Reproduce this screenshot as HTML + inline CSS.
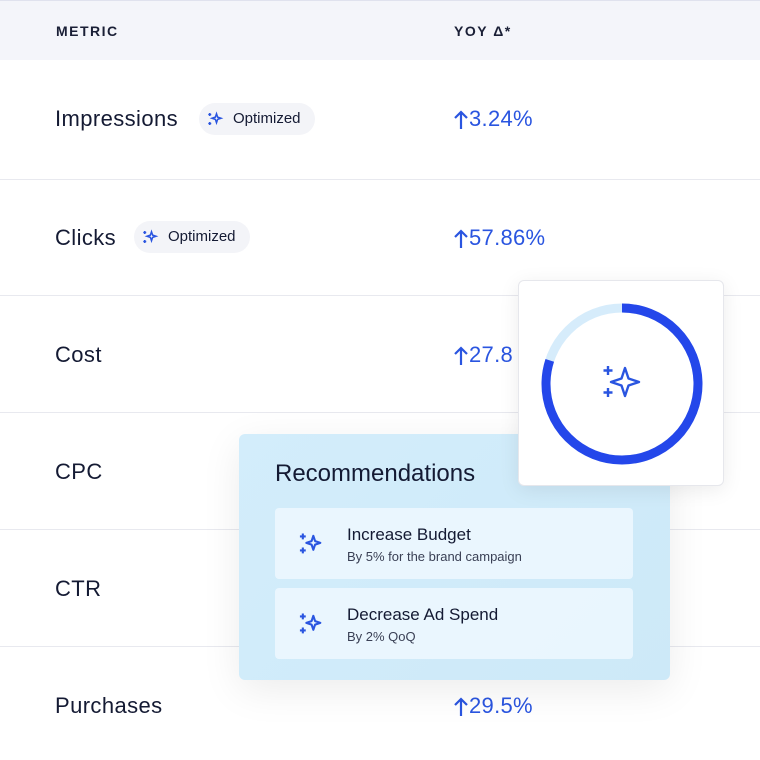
<!DOCTYPE html>
<html><head><style>
*{margin:0;padding:0;box-sizing:border-box}
body{width:760px;height:760px;overflow:hidden;background:#fff;font-family:"Liberation Sans",sans-serif;color:#141a33;position:relative}
.hdr{position:absolute;left:0;top:0;width:760px;height:60px;background:#f4f5fa;border-top:1px solid #e0e2ee}
.hdr span{position:absolute;top:22px;font-size:14px;font-weight:bold;letter-spacing:1.5px;color:#1a1f36}
.row{position:absolute;left:0;width:760px;border-bottom:1px solid #e8e9ef}
.lab{position:absolute;left:55px;font-size:22px;letter-spacing:0.4px;color:#141a33}
.val{position:absolute;left:453px;font-size:22px;letter-spacing:0.3px;color:#2a55e0;padding-left:16px}
.val svg{position:absolute;left:0;top:4px}
.pill{position:absolute;height:32px;border-radius:16px;background:#f3f4f8;font-size:15px;color:#141a33;padding:0 14px 0 34px;line-height:32px}
.pill svg{position:absolute;left:7px;top:7px}
.circ{position:absolute;left:518px;top:280px;width:206px;height:206px;background:#fff;border:1px solid #e6e7ec;border-radius:6px;box-shadow:0 4px 20px rgba(0,0,0,.08);z-index:2}
.rec{position:absolute;left:239px;top:434px;width:431px;height:246px;background:linear-gradient(135deg,#d3edfb,#cde9f8);border-radius:6px;box-shadow:0 10px 40px rgba(0,0,0,.08);z-index:1}
.rec h2{position:absolute;left:36px;top:26px;font-size:24px;font-weight:normal;color:#141a33}
.item{position:absolute;left:36px;width:358px;height:71px;background:rgba(240,249,255,.8);border-radius:4px}
.item .t{position:absolute;left:72px;top:17px;font-size:17px;color:#141a33}
.item .s{position:absolute;left:72px;top:41px;font-size:13px;color:#3a4055}
.item svg{position:absolute;left:22px;top:22px}
</style></head><body>
<div class="hdr"><span style="left:56px">METRIC</span><span style="left:454px">YOY Δ*</span></div>
<div class="row" style="top:60px;height:120px"><div class="lab" style="top:46px">Impressions</div>
<div class="pill" style="left:199px;top:43px">Optimized<svg width="18" height="18" viewBox="0 0 24 24" fill="none" stroke="#2a55e0" stroke-width="2"><path d="M14 5l1.5 4.5L20 11l-4.5 1.5L14 17l-1.5-4.5L8 11l4.5-1.5z"/><path d="M5 4v4M3 6h4M5 16v4M3 18h4"/></svg></div>
<div class="val" style="top:46px"><svg width="16" height="20" viewBox="0 0 16 20" fill="none" stroke="#2a55e0" stroke-width="2.2"><path d="M8 19V2M2 8l6-6 6 6"/></svg>3.24%</div></div>
<div class="row" style="top:180px;height:116px"><div class="lab" style="top:45px">Clicks</div>
<div class="pill" style="left:134px;top:41px">Optimized<svg width="18" height="18" viewBox="0 0 24 24" fill="none" stroke="#2a55e0" stroke-width="2"><path d="M14 5l1.5 4.5L20 11l-4.5 1.5L14 17l-1.5-4.5L8 11l4.5-1.5z"/><path d="M5 4v4M3 6h4M5 16v4M3 18h4"/></svg></div>
<div class="val" style="top:45px"><svg width="16" height="20" viewBox="0 0 16 20" fill="none" stroke="#2a55e0" stroke-width="2.2"><path d="M8 19V2M2 8l6-6 6 6"/></svg>57.86%</div></div>
<div class="row" style="top:296px;height:117px"><div class="lab" style="top:46px">Cost</div><div class="val" style="top:46px"><svg width="16" height="20" viewBox="0 0 16 20" fill="none" stroke="#2a55e0" stroke-width="2.2"><path d="M8 19V2M2 8l6-6 6 6"/></svg>27.8</div></div>
<div class="row" style="top:413px;height:117px"><div class="lab" style="top:46px">CPC</div></div>
<div class="row" style="top:530px;height:117px"><div class="lab" style="top:46px">CTR</div></div>
<div class="row" style="top:647px;height:113px;border:none"><div class="lab" style="top:46px">Purchases</div><div class="val" style="top:46px"><svg width="16" height="20" viewBox="0 0 16 20" fill="none" stroke="#2a55e0" stroke-width="2.2"><path d="M8 19V2M2 8l6-6 6 6"/></svg>29.5%</div></div>
<div class="circ"><svg width="206" height="206" viewBox="0 0 206 206">
<circle cx="103" cy="103" r="76" fill="none" stroke="#d6ecfb" stroke-width="9"/>
<circle cx="103" cy="103" r="76" fill="none" stroke="#2447ea" stroke-width="9" stroke-dasharray="382 1000" transform="rotate(-90 103 103)"/>
<g fill="none" stroke="#2a55e0" stroke-width="2.4" stroke-linejoin="round"><path d="M106 87l3.5 10.5L120 101l-10.5 3.5L106 115l-3.5-10.5L92 101l10.5-3.5z"/><path d="M89 85v9M84.5 89.5h9M89 107v9M84.5 111.5h9"/></g></svg></div>
<div class="rec"><h2>Recommendations</h2>
<div class="item" style="top:74px"><svg width="28" height="28" viewBox="0 0 24 24" fill="none" stroke="#2a55e0" stroke-width="1.8" stroke-linejoin="round"><path d="M14 5l1.5 4.5L20 11l-4.5 1.5L14 17l-1.5-4.5L8 11l4.5-1.5z"/><path d="M5 3v5M2.5 5.5h5M5 15v5M2.5 17.5h5"/></svg><div class="t">Increase Budget</div><div class="s">By 5% for the brand campaign</div></div>
<div class="item" style="top:154px"><svg width="28" height="28" viewBox="0 0 24 24" fill="none" stroke="#2a55e0" stroke-width="1.8" stroke-linejoin="round"><path d="M14 5l1.5 4.5L20 11l-4.5 1.5L14 17l-1.5-4.5L8 11l4.5-1.5z"/><path d="M5 3v5M2.5 5.5h5M5 15v5M2.5 17.5h5"/></svg><div class="t">Decrease Ad Spend</div><div class="s">By 2% QoQ</div></div>
</div>
</body></html>
